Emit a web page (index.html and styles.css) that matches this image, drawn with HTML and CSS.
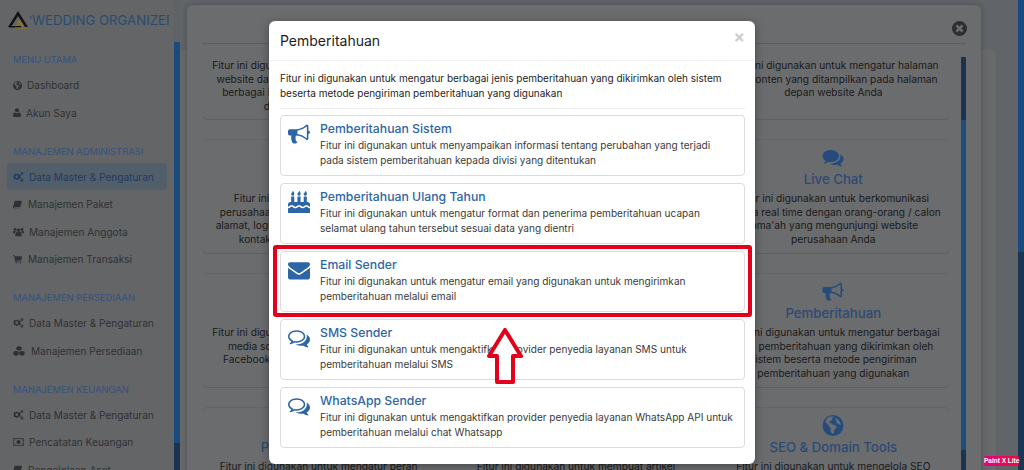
FILE: index.html
```html
<!DOCTYPE html>
<html lang="id">
<head>
<meta charset="utf-8">
<title>Pemberitahuan</title>
<link rel="stylesheet" href="styles.css">
</head>
<body>
<svg class="defs" aria-hidden="true">
  <defs>
    <symbol id="i-bullhorn" viewBox="0 0 1792 1792"><path d="M1664 640q53 0 90.500 37.500t37.500 90.500-37.500 90.500-90.500 37.500v384q0 52-38 90t-90 38q-417-347-812-380-58 19-91 66t-31 100.500 40 92.500q-20 33-23 65.500t6 58 33.500 55 48 50 61.500 50.500q-29 58-111.500 83t-168.500 11.500-132-55.500q-7-23-29.500-87.500t-32-94.500-23-89-15-101 3.500-98.500 22-110.500h-122q-66 0-113-47t-47-113v-192q0-66 47-113t113-47h480q435 0 896-384 52 0 90 38t38 90v384zm-128 604v-954q-394 302-768 343v270q377 42 768 341z"/></symbol>
    <symbol id="i-envelope" viewBox="0 0 1792 1792"><path d="M1792 710v794q0 66-47 113t-113 47h-1472q-66 0-113-47t-47-113v-794q44 49 101 87 362 246 497 345 57 42 92.500 65.500t94.500 48 110 24.500h2q51 0 110-24.500t94.500-48 92.500-65.500q170-123 498-345 57-39 100-87zm0-294q0 79-49 151t-122 123q-376 261-468 325-10 7-42.500 30.500t-54 38-52 32.500-57.500 27-50 9h-2q-23 0-50-9t-57.500-27-52-32.500-54-38-42.500-30.500q-91-64-262-182.500t-205-142.500q-62-42-117-115.500t-55-136.500q0-78 41.500-130t118.500-52h1472q65 0 112.500 47t47.500 113z"/></symbol>
    <symbol id="i-comments-o" viewBox="0 0 1792 1792"><path d="M704 384q-153 0-286 52t-211.500 141-78.500 191q0 82 53 158t149 132l97 56-35 84q34-20 62-39l44-31 53 10q78 14 153 14 153 0 286-52t211.500-141 78.500-191-78.500-191-211.500-141-286-52zm0-128q191 0 353.500 68.500t256.500 186.500 94 257-94 257-256.500 186.500-353.500 68.500q-86 0-176-16-124 88-278 128-36 9-86 16h-3q-11 0-20.500-8t-11.500-21q-1-3-1-6.500t.5-6.500 2-6l2.500-5 3.500-5.500 4-5 4.500-5 4-4.500q5-6 23-25t26-29.500 22.500-29 25-38.500 20.500-44q-124-72-195-177t-71-224q0-139 94-257t256.500-186.500 353.500-68.500zm822 1169q10 24 20.500 44t25 38.500 22.500 29 26 29.500 23 25q1 1 4 4.500t4.500 5 4 5 3.500 5.500l2.500 5 2 6 .5 6.500-1 6.500q-3 14-13 22t-22 7q-50-7-86-16-154-40-278-128-90 16-176 16-271 0-472-132 58 4 88 4 161 0 309-45t264-129q125-92 192-212t67-254q0-77-23-152 129 71 204 178t75 230q0 120-71 224.500t-195 176.500z"/></symbol>
    <symbol id="i-comments" viewBox="0 0 1792 1792"><path d="M1408 768q0 139-94 257t-256.500 186.500-353.500 68.500q-86 0-176-16-124 88-278 128-36 9-86 16h-3q-11 0-20.500-8t-11.500-21q-1-3-1-6.500t.5-6.500 2-6l2.500-5 3.500-5.500 4-5 4.500-5 4-4.500q5-6 23-25t26-29.500 22.500-29 25-38.500 20.500-44q-124-72-195-177t-71-224q0-139 94-257t256.500-186.500 353.500-68.500 353.500 68.500 256.500 186.500 94 257zm384 256q0 120-71 224.500t-195 176.500q10 24 20.500 44t25 38.500 22.500 29 26 29.500 23 25q1 1 4 4.500t4.500 5 4 5 3.500 5.500l2.500 5 2 6 .5 6.500-1 6.500q-3 14-13 22t-22 7q-50-7-86-16-154-40-278-128-90 16-176 16-271 0-472-132 58 4 88 4 161 0 309-45t264-129q125-92 192-212t67-254q0-77-23-152 129 71 204 178t75 230z"/></symbol>
    <symbol id="i-cake" viewBox="0 0 1792 1792"><path d="M1792 1408v384h-1792v-384q45 0 85-14t59-27.500 47-37.500q30-27 51.500-38t56.500-11q24 0 44 7t31 15 33 27q29 25 47 38t58 27 86 14q45 0 85-14.500t58-27 48-37.500q21-19 32.500-27t31-15 43.500-7q35 0 56.500 11t51.500 38q28 24 47 37.500t59 27.500 85 14 85-14 59-27.500 47-37.500q30-27 51.500-38t56.500-11q34 0 55.500 11t51.500 38q29 25 47 38t58 27 86 14zm0-320v192q-24 0-44-7t-31-15-33-27q-29-25-47-38t-58-27-85-14q-46 0-86 14t-58 27-47 38q-22 19-33 27t-31 15-44 7q-35 0-56.500-11t-51.500-38q-29-25-47-38t-58-27-86-14q-45 0-85 14.500t-58 27-48 37.500q-21 19-32.500 27t-31 15-43.500 7q-35 0-56.500-11t-51.500-38q-28-24-47-37.500t-59-27.500-85-14q-46 0-86 14t-58 27-47 38q-30 27-51.500 38t-56.500 11v-192q0-80 56-136t136-56h64v-448h256v448h256v-448h256v448h256v-448h256v448h64q80 0 136 56t56 136zm-1280-864q0 77-36 118.500t-92 41.500q-53 0-90.500-37.500t-37.500-90.500q0-29 9.500-51t23.500-38 31-31 31-31.500 23.500-44.500 9.500-67q38 0 83 74t45 150zm512 0q0 77-36 118.500t-92 41.500q-53 0-90.500-37.500t-37.500-90.500q0-29 9.500-51t23.500-38 31-31 31-31.500 23.500-44.500 9.500-67q38 0 83 74t45 150zm512 0q0 77-36 118.500t-92 41.500q-53 0-90.500-37.500t-37.500-90.500q0-29 9.500-51t23.500-38 31-31 31-31.500 23.500-44.500 9.500-67q38 0 83 74t45 150z"/></symbol>
    <symbol id="i-globe" viewBox="0 0 20 20"><path fill-rule="evenodd" d="M10 0a10 10 0 1 1 0 20 10 10 0 0 1 0-20zM4 3.500 2.500 7l2.500 1.500 1 2.500 2 1.500-.5 3 2 2.500 1.500-1 .5-3 2-2-1-2-3-1-1-1.500-1.500.5-.5-1.500 1.500-1 1.500-.5L9 3l2-1.500H7zm9-.5-1 1.500 1.500 1-.5 1.500 2 1.500 2.500 1c-.2-2.500-1.800-5-4.500-6.500z"/></symbol>
    <symbol id="i-user" viewBox="0 0 12 14"><circle cx="6" cy="3.500" r="3.300"/><path d="M0 14v-3.500C0 8.300 1.500 7 3 7c.8.700 1.900 1.100 3 1.100S8.200 7.700 9 7c1.500 0 3 1.300 3 3.500V14z"/></symbol>
    <symbol id="i-cogs" viewBox="0 0 16 14"><path fill-rule="evenodd" d="M5.500 2.500 7 2l.8 1.300 1.400.6L10.500 3l1 1.500-1 1.100v1.800l1 1.100-1 1.500-1.300-.9-1.400.6L7 11l-1.500.5-.8-1.400-1.400-.3-1.300.7L1 9l.8-1.200L.5 7V5.500l1.300-.4L1 3.800 2 2.500l1.300.7 1.400-.4zM5.500 4.500a2 2 0 1 0 0 4 2 2 0 0 0 0-4z"/><path fill-rule="evenodd" d="M13 0a2 2 0 1 1 0 4 2 2 0 0 1 0-4zm0 1.300a.7.7 0 1 0 0 1.400.7.700 0 0 0 0-1.400zM13 9a2.200 2.200 0 1 1 0 4.400A2.200 2.200 0 0 1 13 9zm0 1.400a.8.800 0 1 0 0 1.600.8.800 0 0 0 0-1.600z"/></symbol>
    <symbol id="i-book" viewBox="0 0 14 12"><path d="M3.500 0H13c.7 0 1 .6.800 1.200L11.500 9c-.2.700-.7 1-1.400 1H2.600c-.6 0-1 .2-1 .6s.4.600 1 .6h9.200L11 12H2c-1.200 0-2-.8-2-2 0-.5.100-.9.300-1.400L2.500 1C2.700.400 3 0 3.500 0z"/></symbol>
    <symbol id="i-users" viewBox="0 0 16 12"><circle cx="8" cy="3.500" r="2.500"/><circle cx="3" cy="2" r="2"/><circle cx="13" cy="2" r="2"/><path d="M3.500 12V9c0-2 1.500-3.500 2.500-3.500.5.500 1.200.7 2 .7s1.500-.2 2-.7c1 0 2.500 1.500 2.500 3.500v3zM0 7.500V6c0-1 .8-1.800 2-1.800.5.300 1 .5 1.500.4.100.4.300.8.600 1C3 6.200 2.400 7 2.300 8zM16 7.500V6c0-1-.8-1.800-2-1.800-.5.300-1 .5-1.500.4-.1.400-.3.800-.6 1 1.100.6 1.700 1.400 1.800 2.400z"/></symbol>
    <symbol id="i-cart" viewBox="0 0 14 13"><path d="M0 0h2.600l.4 1.500h11L13 7.500l-8.200 1 .2 1h8v1.300H3.800L2 1.300H0z"/><circle cx="5" cy="12" r="1"/><circle cx="11.500" cy="12" r="1"/></symbol>
    <symbol id="i-cubes" viewBox="0 0 18 15"><path d="M9 0l4 1.700v3.700L9 7 5 5.400V1.700zM4.500 7l4 1.600v4L4.500 15 .5 12.600v-4zM13.500 7l4 1.600v4L13.500 15l-4-2.400v-4z"/></symbol>
    <symbol id="i-money" viewBox="0 0 16 11"><path fill-rule="evenodd" d="M0 0h16v11H0zm1 1v9h14V1zm7 1.500a3 3 0 1 1 0 6 3 3 0 0 1 0-6zM2 2h2L2 4zm12 0v2l-2-2zM2 9V7l2 2zm12 0h-2l2-2z"/></symbol>
    <symbol id="i-close-circle" viewBox="0 0 16 16"><path fill-rule="evenodd" d="M8 0a8 8 0 1 1 0 16A8 8 0 0 1 8 0zM5.700 3.800 3.800 5.700 6.100 8l-2.300 2.300 1.900 1.900L8 9.900l2.300 2.300 1.900-1.900L9.900 8l2.300-2.300-1.900-1.900L8 6.100z"/></symbol>
  </defs>
</svg>

<div class="page">
  <aside class="sidebar">
    <div class="brand">
      <svg class="brand-logo" viewBox="0 0 20 18"><path class="logo-gold" d="M8 14l4-7 5 8H8z"/><path class="logo-dark" d="M10 0 20 16h-3L10 5 3 16H0z"/><path class="logo-dark" d="M1 15h12v1.500H1z"/><path class="logo-gold" d="M7 16.500h12V18H7z"/></svg>
      <span class="brand-tick">'</span>
      <span class="brand-name">WEDDING ORGANIZER</span>
    </div>
    <nav class="nav">
      <h4 class="nav-head">MENU UTAMA</h4>
      <a class="nav-item"><svg class="nav-icon ic-globe"><use href="#i-globe"/></svg>Dashboard</a>
      <a class="nav-item"><svg class="nav-icon ic-user"><use href="#i-user"/></svg>Akun Saya</a>
      <h4 class="nav-head nav-head-gap">MANAJEMEN ADMINISTRASI</h4>
      <a class="nav-item nav-active"><svg class="nav-icon ic-cogs"><use href="#i-cogs"/></svg>Data Master &amp; Pengaturan</a>
      <a class="nav-item"><svg class="nav-icon ic-book"><use href="#i-book"/></svg>Manajemen Paket</a>
      <a class="nav-item"><svg class="nav-icon ic-cogs"><use href="#i-users"/></svg>Manajemen Anggota</a>
      <a class="nav-item"><svg class="nav-icon ic-book"><use href="#i-cart"/></svg>Manajemen Transaksi</a>
      <h4 class="nav-head nav-head-gap">MANAJEMEN PERSEDIAAN</h4>
      <a class="nav-item"><svg class="nav-icon ic-cogs"><use href="#i-cogs"/></svg>Data Master &amp; Pengaturan</a>
      <a class="nav-item"><svg class="nav-icon ic-cubes"><use href="#i-cubes"/></svg>Manajemen Persediaan</a>
      <h4 class="nav-head nav-head-gap">MANAJEMEN KEUANGAN</h4>
      <a class="nav-item"><svg class="nav-icon ic-cogs"><use href="#i-cogs"/></svg>Data Master &amp; Pengaturan</a>
      <a class="nav-item"><svg class="nav-icon ic-cogs"><use href="#i-money"/></svg>Pencatatan Keuangan</a>
      <a class="nav-item"><svg class="nav-icon ic-book"><use href="#i-book"/></svg>Pengelolaan Aset</a>
    </nav>
  </aside>
  <div class="side-scroll"></div>
  <main class="content"><div class="panel"></div></main>
  <div class="page-scroll"></div>
</div>

<section class="back-modal">
  <div class="back-head"><svg class="back-close"><use href="#i-close-circle"/></svg></div>
  <div class="back-body">
    <div class="card-grid">
      <div class="card card-clipped"><p>Fitur ini digunakan untuk mengatur berbagai<br>website dan konten yang akan ditampilkan<br>berbagai informasi pada halaman utama<br>di depan website Anda</p></div>
      <div class="card card-clipped"><p>Fitur ini digunakan untuk mengatur menu<br>website dan berbagai konten yang<br>berbagai tampilan halaman<br>depan website Anda</p></div>
      <div class="card card-clipped"><p>Fitur ini digunakan untuk mengatur halaman<br>dan konten yang ditampilkan pada halaman<br>depan website Anda</p></div>

      <div class="card"><svg class="card-icon"><use href="#i-user"/></svg><h5>Profil</h5><p>Fitur ini digunakan untuk data profil<br>perusahaan seperti nama, nomor telepon<br>alamat, logo perusahaan, serta info lainnya<br>kontak perusahaan website Anda</p></div>
      <div class="card"><svg class="card-icon"><use href="#i-globe"/></svg><h5>Tampilan</h5><p>Fitur ini digunakan untuk mengatur<br>tampilan website perusahaan<br>seperti warna dan<br>tata letak Anda</p></div>
      <div class="card"><svg class="card-icon"><use href="#i-comments"/></svg><h5>Live Chat</h5><p>Fitur ini digunakan untuk berkomunikasi<br>secara real time dengan orang-orang / calon<br>jama'ah yang mengunjungi website<br>perusahaan Anda</p></div>

      <div class="card"><svg class="card-icon"><use href="#i-comments"/></svg><h5>Sosial Media</h5><p>Fitur ini digunakan untuk mengatur berbagai<br>media sosial perusahaan seperti akun<br>Facebook dan Twitter perusahaan Anda</p></div>
      <div class="card"><svg class="card-icon"><use href="#i-globe"/></svg><h5>Galeri</h5><p>Fitur ini digunakan untuk mengatur<br>galeri foto dan video<br>perusahaan Anda</p></div>
      <div class="card"><svg class="card-icon"><use href="#i-bullhorn"/></svg><h5>Pemberitahuan</h5><p>Fitur ini digunakan untuk mengatur berbagai<br>jenis pemberitahuan yang dikirimkan oleh<br>sistem beserta metode pengiriman<br>pemberitahuan yang digunakan</p></div>

      <div class="card"><svg class="card-icon"><use href="#i-user"/></svg><h5>Peran &amp; Pengguna</h5><p>Fitur ini digunakan untuk mengatur peran</p></div>
      <div class="card"><svg class="card-icon"><use href="#i-globe"/></svg><h5>Bahasa</h5><p>Fitur ini digunakan untuk membuat artikel</p></div>
      <div class="card"><svg class="card-icon"><use href="#i-globe"/></svg><h5>SEO &amp; Domain Tools</h5><p>Fitur ini digunakan untuk mengelola SEO</p></div>
    </div>
  </div>
  <div class="back-scroll"></div>
</section>

<section class="modal">
  <header class="modal-head">
    <h3>Pemberitahuan</h3>
    <span class="modal-x">×</span>
  </header>
  <div class="modal-body">
    <p class="intro">Fitur ini digunakan untuk mengatur berbagai jenis pemberitahuan yang dikirimkan oleh sistem<br>beserta metode pengiriman pemberitahuan yang digunakan</p>
    <div class="items">
      <div class="item">
        <svg class="item-icon"><use href="#i-bullhorn"/></svg>
        <div><h4>Pemberitahuan Sistem</h4><p>Fitur ini digunakan untuk menyampaikan informasi tentang perubahan yang terjadi<br>pada sistem pemberitahuan kepada divisi yang ditentukan</p></div>
      </div>
      <div class="item">
        <svg class="item-icon"><use href="#i-cake"/></svg>
        <div><h4>Pemberitahuan Ulang Tahun</h4><p>Fitur ini digunakan untuk mengatur format dan penerima pemberitahuan ucapan<br>selamat ulang tahun tersebut sesuai data yang dientri</p></div>
      </div>
      <div class="item">
        <svg class="item-icon"><use href="#i-envelope"/></svg>
        <div><h4>Email Sender</h4><p>Fitur ini digunakan untuk mengatur email yang digunakan untuk mengirimkan<br>pemberitahuan melalui email</p></div>
      </div>
      <div class="item">
        <svg class="item-icon"><use href="#i-comments-o"/></svg>
        <div><h4>SMS Sender</h4><p>Fitur ini digunakan untuk mengaktifkan provider penyedia layanan SMS untuk<br>pemberitahuan melalui SMS</p></div>
      </div>
      <div class="item">
        <svg class="item-icon"><use href="#i-comments-o"/></svg>
        <div><h4>WhatsApp Sender</h4><p>Fitur ini digunakan untuk mengaktifkan provider penyedia layanan WhatsApp API untuk<br>pemberitahuan melalui chat Whatsapp</p></div>
      </div>
    </div>
  </div>
</section>

<div class="mark-box"></div>
<svg class="mark-arrow" viewBox="0 0 36 56"><path d="M18 2 34 28H26V54H10V28H2z"/></svg>
<div class="paint-badge">Paint X Lite</div>
</body>
</html>
```

FILE: styles.css
```css
* { box-sizing: border-box; }
html, body { margin: 0; height: 470px; overflow: hidden; }
body {
  position: relative;
  width: 1024px;
  background: #606366;
  font-family: Inter, "Liberation Sans", sans-serif;
  color: #1b1b1b;
}
h3, h4, h5, p { margin: 0; }
.defs { position: absolute; width: 0; height: 0; }

.page { display: flex; height: 470px; }
.sidebar { width: 174px; flex: none; background: #646567; overflow: hidden; padding: 10px 7px 0; }
.side-scroll {
  width: 6px; flex: none; margin-top: 42px;
  background: linear-gradient(#1b4b7e 0 401px, #1b3350 401px);
}
.content { flex: 1; background: #616468; padding: 50px 21px 0 0; }
.panel { height: 420px; background: #67696b; border-radius: 4px 4px 0 0; border-right: 1px solid #5f6164; }
.page-scroll { width: 6px; flex: none; background: linear-gradient(#1b4b7e 0 252px, #1a3654 252px); }

.brand { display: flex; align-items: center; height: 19px; white-space: nowrap; overflow: hidden; margin-left: 1px; width: 161px; }
.brand-logo { width: 20px; height: 18px; flex: none; }
.logo-dark { fill: #141414; }
.logo-gold { fill: #7f7238; }
.brand-tick { width: 3px; margin-left: 1px; color: #2a4b70; font-size: 11px; }
.brand-name { font-size: 13.200px; color: #2a4b70; margin-left: 0; }

.nav { margin-top: 23px; }
.nav-head { font-size: 9.400px; font-weight: 400; line-height: 16px; color: #36517f; padding-left: 6px; margin-bottom: 3.250px; white-space: nowrap; }
.nav-head-gap { margin-top: 17.250px; }
.nav-item {
  display: flex; align-items: center; height: 27.500px;
  padding-left: 6px; border-radius: 4px;
  font-size: 10.100px; color: #2f3133; white-space: nowrap;
}
.nav-active { background: #535e6b; color: #1f3b60; }
.nav-active .nav-icon { fill: #1f3b60; }
.nav-icon { flex: none; fill: #2e3032; margin-right: 6px; }
.ic-globe { width: 9px; height: 9px; margin-right: 5px; }
.ic-user { width: 8px; height: 9px; margin-right: 5px; }
.ic-cogs { width: 11px; height: 10px; margin-right: 5px; }
.ic-book { width: 9px; height: 9px; }
.ic-cubes { width: 12px; height: 10px; }

.back-modal {
  position: absolute; left: 187px; top: 5px; width: 794px; height: 480px;
  background: #6b6c6e; border-radius: 6px;
  box-shadow: 0 0 6px rgba(0, 0, 0, .25);
}
.back-head { height: 39px; margin: 0 15px; border-bottom: 1px solid #5c5d5f; position: relative; }
.back-close { position: absolute; right: -1px; top: 16px; width: 15px; height: 15px; fill: #2e2e2e; }
.back-body { height: 441px; overflow: hidden; padding: 0 31px 0 15px; }
.card-grid {
  display: grid; grid-template-columns: repeat(3, minmax(0, 1fr)); column-gap: 24px; row-gap: 19px;
  margin-top: -39px; grid-auto-rows: 115px;
}
.card {
  border-top: 1px solid #636466; border-bottom: 1px solid #5e5f61; border-radius: 6px;
  display: flex; flex-direction: column; align-items: center;
  text-align: center; padding-top: 7px;
}
.card-clipped { padding-top: 53px; }
.card h5 { font-size: 13.200px; line-height: 18px; font-weight: 500; color: #2b4a75; margin-bottom: 4px; white-space: nowrap; }
.card p { font-size: 10.200px; line-height: 13.500px; color: #191919; white-space: nowrap; }
.card-icon { width: 22px; height: 21px; fill: #254b7c; margin-bottom: 2px; flex: none; }
.back-scroll {
  position: absolute; left: 774px; top: 52px; width: 5px; height: 440px;
  background: linear-gradient(#1b3350 0 63px, #1d4c7f 63px 393px, #1b3350 393px);
}

.modal {
  position: absolute; left: 269px; top: 21px; width: 486px; height: 443px;
  background: #fff; border-radius: 6px;
  box-shadow: 0 2px 10px rgba(0, 0, 0, .35);
}
.modal-head {
  display: flex; justify-content: space-between; align-items: center;
  height: 40px; padding: 0 11px; border-bottom: 1px solid #f0f0f0;
}
.modal-head h3 { font-size: 14px; font-weight: 400; color: #1d1d1d; }
.modal-x { font-size: 17px; font-weight: 700; color: #cfcfcf; margin-top: -8px; margin-right: -1px; }
.modal-body { padding: 10px 10px 0 11px; }
.intro {
  font-size: 10px; line-height: 15px; color: #1d1d1d; white-space: nowrap;
  padding-bottom: 7px; border-bottom: 1px solid #efefef;
}
.items { display: flex; flex-direction: column; gap: 7px; margin-top: 6px; }
.item {
  display: flex; gap: 10px; height: 61px; padding: 6px 7px;
  border: 1px solid #dcdcdc; border-radius: 4px;
}
.item-icon { width: 22px; height: 22px; fill: #2d66a6; flex: none; margin-top: 1px; }
.item h4 { font-size: 12.250px; line-height: 14px; font-weight: 500; color: #2d66a6; margin-bottom: 2px; white-space: nowrap; }
.item p { font-size: 10.070px; line-height: 15px; color: #3a3a3a; white-space: nowrap; }

.mark-box {
  position: absolute; left: 273px; top: 245px; width: 479px; height: 72px;
  border: 4px solid #e4001b; border-radius: 3px;
}
.mark-arrow { position: absolute; left: 487px; top: 328px; width: 36px; height: 56px; fill: #fff; stroke: #e4001b; stroke-width: 4; stroke-linejoin: round; }
.paint-badge {
  position: absolute; left: 984px; top: 456px; width: 35px; height: 10px;
  background: linear-gradient(90deg, #e6007e, #e8103f); border-radius: 2px; color: #fff;
  font: 700 6.500px/10px "Liberation Sans", sans-serif; text-align: center; white-space: nowrap;
}
```
